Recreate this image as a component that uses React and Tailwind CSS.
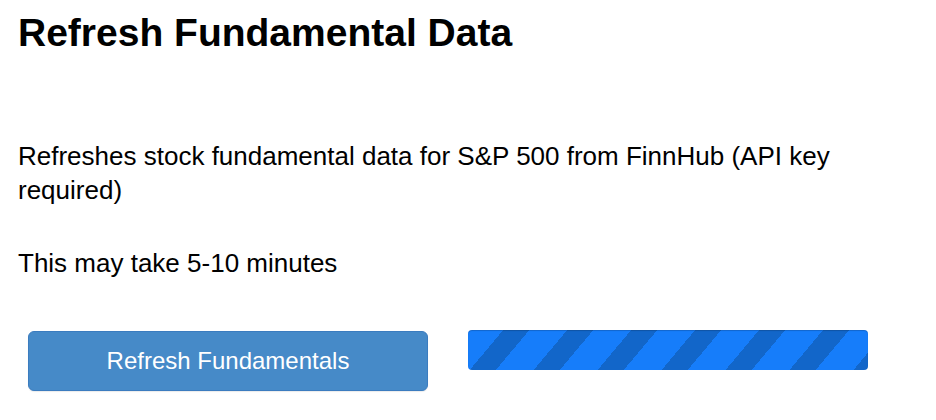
export default function App() {
  return (
    <div className="w-[936px] h-[420px] bg-white px-[18px] text-black font-['Liberation_Sans','Helvetica',Arial,sans-serif]">
      <h1 className="pt-[10px] text-[39px] leading-[46px] font-bold">Refresh Fundamental Data</h1>
      <p className="mt-[83px] text-[26px] leading-[34px]">
        Refreshes stock fundamental data for S&amp;P 500 from FinnHub (API key required)
      </p>
      <p className="mt-[39px] text-[26px] leading-[34px]">This may take 5-10 minutes</p>
      <div className="mt-[51px] flex items-start gap-[40px] pl-[10px]">
        <button className="w-[400px] h-[60px] rounded-[6px] border border-[#3b7cbf] bg-[#468ac8] text-white text-[24px] shadow-[0_1px_1px_rgba(0,0,0,0.08)]">
          Refresh Fundamentals
        </button>
        <div className="mt-[-1px] w-[400px] h-[40px] rounded-[4px] bg-[repeating-linear-gradient(130deg,#167dfa_0px,#167dfa_27px,#1266c9_27px,#1266c9_47px,#167dfa_47px,#167dfa_49px)] shadow-[inset_0_1px_1px_rgba(0,0,0,0.18)]"></div>
      </div>
    </div>
  );
}
